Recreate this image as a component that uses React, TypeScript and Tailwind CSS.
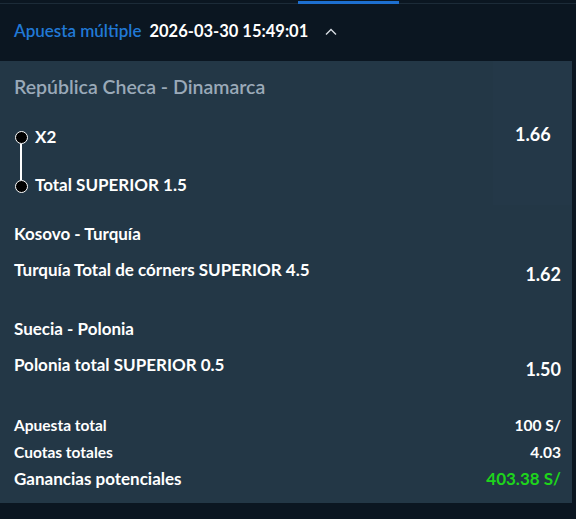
import React from "react";

const font = { fontFamily: "Lato, 'Open Sans', sans-serif" };

const App = () => {
  const bets = [
    { match: "Kosovo - Turquía", pick: "Turquía Total de córners SUPERIOR 4.5", odd: "1.62" },
    { match: "Suecia - Polonia", pick: "Polonia total SUPERIOR 0.5", odd: "1.50" },
  ];

  return (
    <div className="w-[576px] h-[519px] bg-[#0b1621] text-white overflow-hidden" style={font}>
      {/* Tabs line */}
      <div className="relative h-[4px] border-b border-[#1c2b38]">
        <div className="absolute left-[298px] top-[1px] w-[101px] h-[3px] bg-[#1d6fd0]" />
      </div>

      {/* Header */}
      <div className="h-[57px] flex items-center px-[14px] pb-[3px] gap-[8px]">
        <span className="text-[17px] font-semibold text-[#2179d6]">Apuesta múltiple</span>
        <span className="text-[16.5px] font-bold">2026-03-30 15:49:01</span>
        <svg width="14" height="10" viewBox="0 0 14 10" className="ml-[8px] mt-[2px]">
          <path d="M2 7.5 L7 2.5 L12 7.5" stroke="#d8dde3" strokeWidth="1.4" fill="none" />
        </svg>
      </div>

      {/* Card */}
      <div className="mr-[4px] bg-[#233746] h-[442px] flex flex-col">
        {/* First event */}
        <div className="flex h-[144px]">
          <div className="flex-1 pl-[14px] pt-[14px]">
            <div className="text-[19.5px] font-semibold text-[#9aa9b8] leading-[24px]">
              República Checa - Dinamarca
            </div>
            <div className="flex mt-[28px]">
              <div className="flex flex-col items-center w-[14px] pt-[4px]">
                <div className="w-[13px] h-[13px] rounded-full bg-black border border-white" />
                <div className="w-[2px] h-[36px] bg-white" />
                <div className="w-[13px] h-[13px] rounded-full bg-black border border-white" />
              </div>
              <div className="ml-[7px] flex flex-col">
                <span className="text-[17px] font-bold leading-[20px]">X2</span>
                <span className="text-[17px] font-bold leading-[20px] mt-[28px]">Total SUPERIOR 1.5</span>
              </div>
            </div>
          </div>
          <div className="w-[79px] bg-[#243848] pt-[62px] pl-[22px]">
            <span className="text-[18px] font-bold leading-[20px]">1.66</span>
          </div>
        </div>

        {/* Other events */}
        {bets.map((b, i) => (
          <div key={i} className="pl-[14px] pr-[11px] mt-[19px] mb-[16px]">
            <div className="text-[17px] font-bold leading-[20px]">{b.match}</div>
            <div className="flex justify-between items-start mt-[16px]">
              <span className="text-[17px] font-bold leading-[20px]">{b.pick}</span>
              <span className="text-[18px] font-bold leading-[20px] mt-[4px]">{b.odd}</span>
            </div>
          </div>
        ))}

        {/* Summary */}
        <div className="pl-[14px] pr-[11px] mt-auto mb-[14px] flex flex-col gap-[7px]">
          <div className="flex justify-between text-[15.5px] font-bold leading-[20px]">
            <span>Apuesta total</span>
            <span>100 S/</span>
          </div>
          <div className="flex justify-between text-[15.5px] font-bold leading-[20px]">
            <span>Cuotas totales</span>
            <span>4.03</span>
          </div>
          <div className="flex justify-between text-[17px] font-bold leading-[20px]">
            <span>Ganancias potenciales</span>
            <span className="text-[#1ed41c]">403.38 S/</span>
          </div>
        </div>
      </div>
    </div>
  );
};

export default App;
